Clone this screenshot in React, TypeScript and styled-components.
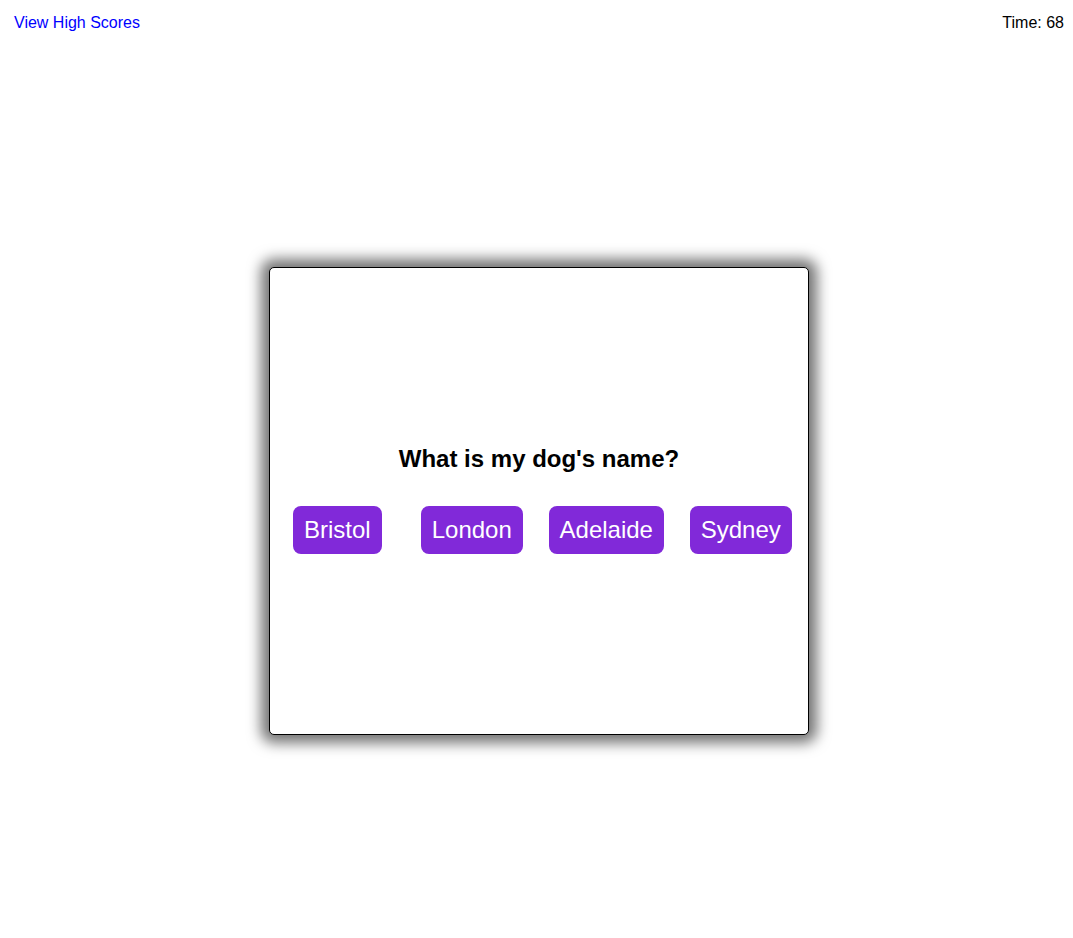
import React from "react";
import styled, { createGlobalStyle } from "styled-components";

const GlobalStyle = createGlobalStyle`
  html, body {
    margin: 0;
    padding: 0;
    background: #ffffff;
    font-family: "Liberation Sans", Arial, sans-serif;
  }
`;

const Page = styled.div`
  min-height: 100vh;
`;

const Header = styled.header`
  display: flex;
  justify-content: space-between;
  align-items: center;
  padding: 14px 9px 0 14px;
  font-size: 16px;
  line-height: 18px;
`;

const ScoresLink = styled.a`
  color: #0000ff;
  text-decoration: none;
  cursor: pointer;
`;

const Timer = styled.div`
  color: #000000;
`;

const Main = styled.main`
  display: flex;
  justify-content: center;
  padding: 0 0 40px 5px;
  margin-top: 235px;
`;

const Card = styled.section`
  box-sizing: border-box;
  width: 540px;
  height: 468px;
  padding-bottom: 3px;
  border: 1px solid #000000;
  border-radius: 5px;
  background: #ffffff;
  box-shadow: 0 0 14px 8px rgba(0, 0, 0, 0.55);
  display: flex;
  flex-direction: column;
  justify-content: center;
  align-items: stretch;
`;

const Question = styled.h2`
  margin: 0 0 33px;
  text-align: center;
  font-size: 24px;
  font-weight: bold;
  line-height: 28px;
  color: #000000;
`;

const Choices = styled.div`
  display: grid;
  grid-template-columns: repeat(4, 1fr);
  justify-items: center;
`;

const Choice = styled.button`
  font-family: "Liberation Sans", Arial, sans-serif;
  font-size: 24px;
  line-height: 28px;
  color: #ffffff;
  background: #8129d9;
  border: none;
  border-radius: 8px;
  padding: 10px 11px;
  cursor: pointer;
`;

const answers = ["Bristol", "London", "Adelaide", "Sydney"];

export default function App() {
  return (
    <Page>
      <GlobalStyle />
      <Header>
        <ScoresLink>View High Scores</ScoresLink>
        <Timer>Time: 68</Timer>
      </Header>
      <Main>
        <Card>
          <Question>What is my dog's name?</Question>
          <Choices>
            {answers.map((a) => (
              <Choice key={a}>{a}</Choice>
            ))}
          </Choices>
        </Card>
      </Main>
    </Page>
  );
}
